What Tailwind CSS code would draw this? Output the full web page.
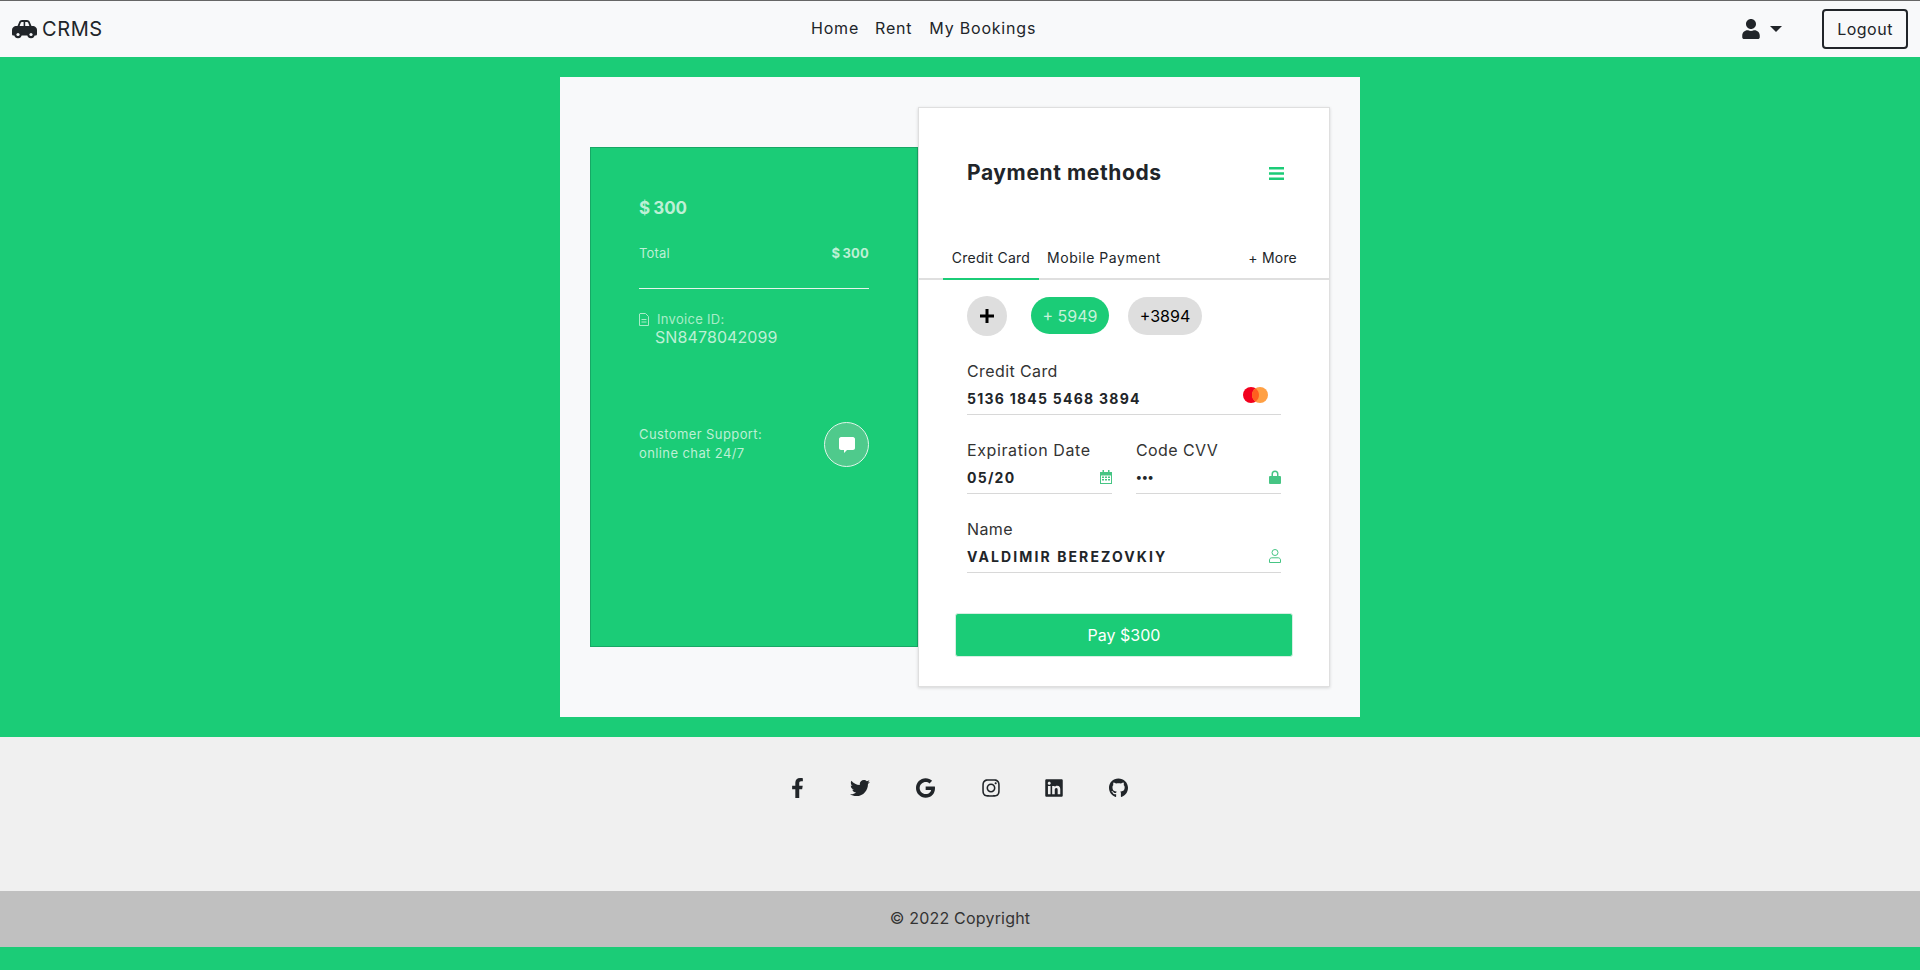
<!DOCTYPE html>
<html><head><meta charset="utf-8"><script src="https://cdn.jsdelivr.net/npm/@tailwindcss/browser@4"></script></head>
<body class="bg-[#1bcc77] font-['Inter','Liberation_Sans',sans-serif] text-[#212529]">
<div class="flex h-[970px] w-[1920px] flex-col overflow-hidden">
<nav class="relative flex h-[57px] shrink-0 items-center justify-between border-t border-[#666] bg-[#f8f9fa] pl-[12px] pr-[12px]">
  <div class="flex items-center gap-[5px]">
    <svg class="h-[20px] w-[25px]" viewBox="0 0 25 20" fill="#212529"><path d="M5.500 7 7.300 2.800C7.800 1.700 8.700 1 10 1h5c1.300 0 2.200.7 2.700 1.800L19.500 7H21.500C23.500 7.500 25 9 25 11v4c0 1-.7 1.500-1.500 1.500H1.500C.7 16.500 0 16 0 15v-4c0-2 1.500-3.500 3.500-4z"/><path fill="#f8f9fa" d="M7.600 7 8.900 3.600C9.100 3.200 9.400 3 9.900 3h1.700v4zM13.200 3h1.900c.5 0 .8.200 1 .6L17.400 7h-4.200z"/><circle cx="6" cy="15.500" r="3.700"/><circle cx="19" cy="15.500" r="3.700"/><circle cx="6" cy="15.500" r="1.600" fill="#f8f9fa"/><circle cx="19" cy="15.500" r="1.600" fill="#f8f9fa"/></svg>
    <span class="text-[20px] tracking-[.6px]">CRMS</span>
  </div>
  <div class="absolute left-[811px] top-[15px] flex gap-[16px] text-[16px] tracking-[.8px]"><span>Home</span><span>Rent</span><span class="ml-[1px]">My Bookings</span></div>
  <div class="flex items-center">
    <svg class="mr-[10px] h-[20px] w-[18px]" viewBox="0 0 448 512" fill="#212529"><path d="M224 256c70.700 0 128-57.300 128-128S294.700 0 224 0 96 57.300 96 128s57.300 128 128 128zm89.600 32h-16.700c-22.200 10.200-46.900 16-72.900 16s-50.600-5.800-72.900-16h-16.700C60.200 288 0 348.200 0 422.400V464c0 26.500 21.500 48 48 48h352c26.500 0 48-21.500 48-48v-41.600c0-74.200-60.200-134.400-134.400-134.400z"/></svg>
    <span class="mr-[40px] h-0 w-0 border-x-[6px] border-t-[6px] border-x-transparent border-t-[#212529]"></span>
    <span class="flex h-[40px] w-[86px] items-center justify-center rounded-[4px] border-2 border-[#212529] text-[16px] tracking-[.5px]">Logout</span>
  </div>
</nav>
<main class="flex h-[680px] shrink-0 justify-center pt-[20px]">
  <div class="flex h-[640px] w-[800px] items-center bg-[#f8f9fa] pl-[30px]">
    <section class="h-[500px] w-[328px] border border-[#17a865] bg-[#1bcc77] px-[48px] pt-[48px] text-[#bdf0d5]">
      <div class="text-[17px] font-bold leading-[24px] [word-spacing:-1px]">$ 300</div>
      <div class="mt-[22px] flex items-center justify-between border-b border-[#e8f3ec] pb-[24px] text-[13px] leading-[22px] tracking-[.2px]"><span>Total</span><span class="font-bold [word-spacing:-1px]">$ 300</span></div>
      <div class="mt-[21px] flex items-center gap-[8px] text-[13px] leading-[18px] tracking-[.3px] text-[#a9ecc8]"><svg class="h-[13px] w-[10px]" viewBox="0 0 10 13" fill="none" stroke="currentColor"><path d="M1 .5h5.500L9.500 3.500V12.500H.5V1ZM2.500 6.500h5M2.500 9h5"/></svg><span>Invoice ID:</span></div>
      <div class="-mt-[1px] ml-[16px] text-[16px] leading-[20px] tracking-[.1px]">SN8478042099</div>
      <div class="mt-[75px] flex items-center justify-between text-[13px] leading-[19px] tracking-[.4px]"><div class="-mt-[2px]"><div>Customer Support:</div><div>online chat 24/7</div></div>
        <div class="flex h-[45px] w-[45px] items-center justify-center rounded-full border border-[#e1f5ea] bg-[#4fca8c]"><svg class="h-[16px] w-[16px]" viewBox="0 0 16 16" fill="#fff"><path d="M2 0h12c1 0 2 1 2 2v9c0 1-1 2-2 2H8L5 16v-3H2c-1 0-2-1-2-2V2C0 1 1 0 2 0z"/></svg></div>
      </div>
    </section>
    <section class="flex h-[580px] w-[412px] flex-col border border-[#dfdfdf] bg-white shadow-[0_1px_3px_rgba(0,0,0,.15)]">
      <div class="flex h-[130px] shrink-0 items-end justify-between pb-[50px] pl-[48px] pr-[45px]"><h2 class="text-[21px] font-bold leading-[30px] tracking-[.6px]">Payment methods</h2><svg class="mb-[8px] h-[13px] w-[15px]" viewBox="0 0 15 13" fill="#1bcc77"><path d="M0 0h15v2.500H0zM0 5.200h15v2.500H0zM0 10.500h15V13H0z"/></svg></div>
      <div class="relative flex h-[42px] shrink-0 border-b-2 border-[#dfdfdf] text-[14px] leading-[20px]"><span class="mb-[-2px] ml-[24px] flex h-[42px] w-[96px] justify-center border-b-2 border-[#1bcc77] pt-[10px] tracking-[.25px]">Credit Card</span><span class="ml-[8px] pt-[10px] tracking-[.55px]">Mobile Payment</span><span class="ml-auto mr-[32px] pt-[10px] tracking-[.2px]">+ More</span></div>
      <div class="flex h-[57px] shrink-0 items-center pl-[48px] pt-[14px] text-[16px]"><span class="flex h-[40px] w-[40px] items-center justify-center rounded-full bg-[#dedede]"><svg class="h-[14px] w-[14px]" viewBox="0 0 14 14" fill="#000"><path d="M5.500 0h3v5.500H14v3H8.500V14h-3V8.500H0v-3h5.500z"/></svg></span><span class="ml-[24px] flex h-[37px] w-[78px] items-center justify-center rounded-full bg-[#1bcc77] text-[#c5f2da]">+ 5949</span><span class="ml-[19px] flex h-[38px] w-[74px] items-center justify-center rounded-full bg-[#dedede] text-black">+3894</span></div>
      <div class="mx-[48px] mt-[23px] flex flex-col">
        <label class="block text-[16px] leading-[22px] tracking-[.4px] text-[#333]">Credit Card</label>
        <div class="flex h-[33px] items-center justify-between border-b border-[#d8d8d8] text-[14px] font-bold tracking-[1.25px]"><span>5136 1845 5468 3894</span><svg class="mb-[6px] mr-[12px] h-[18px] w-[27px]" viewBox="0 0 27 18"><circle cx="9" cy="9" r="8" fill="#f2001d"/><circle cx="18" cy="9" r="8" fill="#ffa044"/><path d="M13.500 2.400a8 8 0 0 1 0 13.200 8 8 0 0 1 0-13.200z" fill="#ff5f1f"/></svg></div>
        <div class="mt-[24px] grid grid-cols-[145px_145px] gap-x-[24px]">
          <div><label class="block text-[16px] leading-[22px] tracking-[.6px] text-[#333]">Expiration Date</label><div class="flex h-[33px] items-center justify-between border-b border-[#d8d8d8] text-[14px] font-bold tracking-[1.25px]"><span>05/20</span><svg class="h-[14px] w-[12px]" viewBox="0 0 12 14" fill="#46c584"><path d="M0 2h2.500V0H4v2h4V0h1.500v2H12v12H0zM1 5.500v7.500h10V5.500zM2 6.500h2v1.500H2zM5 6.500h2v1.500H5zM8 6.500h2v1.500H8zM2 9h2v1.500H2zM5 9h2v1.500H5zM8 9h2v1.500H8z" fill-rule="evenodd"/></svg></div></div>
          <div><label class="block text-[16px] leading-[22px] tracking-[.4px] text-[#333]">Code CVV</label><div class="flex h-[33px] items-center justify-between border-b border-[#d8d8d8] text-[14px] font-bold"><span class="text-[12px] tracking-[.2px]">•••</span><svg class="h-[14px] w-[12px]" viewBox="0 0 12 14" fill="#46c584"><path d="M2.500 6V4a3.500 3.500 0 0 1 7 0v2H11a1 1 0 0 1 1 1v6a1 1 0 0 1-1 1H1a1 1 0 0 1-1-1V7a1 1 0 0 1 1-1zM4 6h4V4a2 2 0 0 0-4 0z"/></svg></div></div>
        </div>
        <div class="mt-[24px]"><label class="block text-[16px] leading-[22px] tracking-[.4px] text-[#333]">Name</label><div class="flex h-[33px] items-center justify-between border-b border-[#d8d8d8] text-[14px] font-bold tracking-[2.1px]"><span>VALDIMIR BEREZOVKIY</span><svg class="h-[14px] w-[12px]" viewBox="0 0 12 14" fill="none" stroke="#46c584"><circle cx="6" cy="3.500" r="3"/><path d="M.5 13.500v-2.500c0-1.200 1-2.200 2.200-2.200h6.600c1.200 0 2.200 1 2.200 2.200v2.500z"/></svg></div></div>
      </div>
      <div class="mx-[36px] mt-[40px] flex h-[44px] items-center justify-center rounded-[3px] border border-[#d5efe2] bg-[#1bcc77] text-[16px] text-white">Pay $300</div>
    </section>
  </div>
</main>
<footer class="flex h-[154px] shrink-0 justify-center bg-[#f0f0f0] text-[#212529]">
  <div class="relative h-[20px] w-[1920px]">
    <div class="absolute left-[791px] top-[41px] flex items-center">
      <svg class="h-[20px] w-[13px]" viewBox="0 0 320 512" fill="currentColor"><path d="M279.140 288l14.220-92.660h-88.910v-60.130c0-25.350 12.420-50.060 52.240-50.060h40.420V6.260S260.430 0 225.360 0c-73.220 0-121.080 44.380-121.080 124.720v70.620H22.890V288h81.390v224h100.170V288z"/></svg>
      <svg class="ml-[46px] h-[20px] w-[20px]" viewBox="0 0 512 512" fill="currentColor"><path d="M459.370 151.716c.325 4.548.325 9.097.325 13.645 0 138.720-105.583 298.558-298.558 298.558-59.452 0-114.680-17.219-161.137-47.106 8.447.974 16.568 1.299 25.340 1.299 49.055 0 94.213-16.568 130.274-44.832-46.132-.975-84.792-31.188-98.112-72.772 6.498.974 12.995 1.624 19.818 1.624 9.421 0 18.843-1.300 27.614-3.573-48.081-9.747-84.143-51.980-84.143-102.985v-1.299c13.969 7.797 30.214 12.670 47.431 13.319-28.264-18.843-46.781-51.005-46.781-87.391 0-19.492 5.197-37.360 14.294-52.954 51.655 63.675 129.300 105.258 216.365 109.807-1.624-7.797-2.599-15.918-2.599-24.040 0-57.828 46.782-104.934 104.934-104.934 30.213 0 57.502 12.670 76.670 33.137 23.715-4.548 46.456-13.320 66.599-25.340-7.798 24.366-24.366 44.833-46.132 57.827 21.117-2.273 41.584-8.122 60.426-16.243-14.292 20.791-32.161 39.308-52.628 54.253z"/></svg>
      <svg class="ml-[46px] h-[20px] w-[19px]" viewBox="0 0 488 512" fill="currentColor"><path d="M488 261.800C488 403.300 391.100 504 248 504 110.800 504 0 393.200 0 256S110.800 8 248 8c66.800 0 123 24.500 166.300 64.900l-67.500 64.900C258.500 52.600 94.300 116.600 94.300 256c0 86.500 69.100 156.600 153.700 156.600 98.200 0 135-70.400 140.800-106.900H248v-85.300h236.100c2.300 12.700 3.900 24.900 3.900 41.400z"/></svg>
      <svg class="ml-[47px] h-[20px] w-[18px]" viewBox="0 0 448 512" fill="currentColor"><path d="M224.100 141c-63.600 0-114.900 51.300-114.900 114.900s51.300 114.900 114.900 114.900S339 319.500 339 255.900 287.700 141 224.100 141zm0 189.600c-41.100 0-74.700-33.500-74.700-74.700s33.500-74.700 74.700-74.700 74.700 33.500 74.700 74.700-33.600 74.700-74.700 74.700zm146.400-194.300c0 14.900-12 26.800-26.800 26.800-14.900 0-26.800-12-26.800-26.800s12-26.800 26.800-26.800 26.800 12 26.800 26.800zm76.100 27.200c-1.700-35.900-9.900-67.700-36.200-93.900-26.200-26.200-58-34.400-93.900-36.200-37-2.100-147.900-2.100-184.900 0-35.800 1.700-67.600 9.900-93.900 36.100s-34.400 58-36.200 93.900c-2.100 37-2.100 147.900 0 184.900 1.700 35.900 9.900 67.700 36.200 93.900s58 34.400 93.900 36.200c37 2.100 147.900 2.100 184.900 0 35.900-1.700 67.700-9.900 93.900-36.200 26.200-26.200 34.400-58 36.200-93.900 2.100-37 2.100-147.800 0-184.800zM398.800 388c-7.800 19.600-22.900 34.700-42.600 42.600-29.500 11.700-99.500 9-132.100 9s-102.700 2.600-132.100-9c-19.600-7.800-34.700-22.900-42.600-42.600-11.700-29.500-9-99.500-9-132.100s-2.600-102.700 9-132.100c7.800-19.600 22.900-34.700 42.600-42.600 29.500-11.700 99.500-9 132.100-9s102.700-2.600 132.100 9c19.600 7.800 34.700 22.900 42.600 42.600 11.700 29.500 9 99.500 9 132.100s2.700 102.700-9 132.100z"/></svg>
      <svg class="ml-[45px] h-[20px] w-[18px]" viewBox="0 0 448 512" fill="currentColor"><path d="M416 32H31.900C14.300 32 0 46.500 0 64.300v383.400C0 465.500 14.300 480 31.900 480H416c17.600 0 32-14.500 32-32.300V64.300c0-17.800-14.400-32.300-32-32.300zM135.400 416H69V202.200h66.500V416zm-33.200-243c-21.300 0-38.500-17.300-38.500-38.500S80.900 96 102.200 96c21.200 0 38.500 17.300 38.500 38.500 0 21.300-17.200 38.500-38.500 38.500zm282.100 243h-66.400V312c0-24.800-.5-56.700-34.500-56.700-34.600 0-39.900 27-39.900 54.900V416h-66.400V202.200h63.700v29.200h.9c8.900-16.800 30.600-34.500 62.900-34.500 67.200 0 79.700 44.300 79.700 101.900V416z"/></svg>
      <svg class="ml-[46px] h-[20px] w-[19px]" viewBox="0 0 496 512" fill="currentColor"><path d="M244.800 8C106.100 8 0 113.300 0 252c0 110.900 69.800 205.800 169.500 239.200 12.800 2.300 17.300-5.600 17.300-12.100 0-6.200-.3-40.400-.3-61.400 0 0-70 15-84.700-29.800 0 0-11.400-29.100-27.800-36.600 0 0-22.900-15.700 1.600-16 0 0 24.900 2 38.600 25.800 21.900 38.600 58.600 27.500 72.900 20.900 2.300-16 8.800-27.100 16-33.700-55.900-6.200-112.300-14.300-112.300-110.500 0-27.500 7.600-41.300 23.600-58.900-2.600-6.500-11.100-33.300 2.600-67.900 20.900-6.500 69 27 69 27 20-5.600 41.500-8.500 62.800-8.500s42.800 2.900 62.800 8.500c0 0 48.100-33.600 69-27 13.700 34.700 5.200 61.400 2.600 67.900 16 17.700 25.800 31.500 25.800 58.900 0 96.500-58.900 104.200-114.800 110.500 9.200 7.900 17 22.900 17 46.400 0 33.700-.3 75.400-.3 83.600 0 6.500 4.600 14.400 17.300 12.100C428.200 457.800 496 362.900 496 252 496 113.300 383.500 8 244.800 8z"/></svg>
    </div>
  </div>
</footer>
<div class="flex h-[56px] shrink-0 items-center justify-center bg-[#c0c0c0] pb-[2px] text-[16px] tracking-[.2px] text-[#333]">© 2022 Copyright</div>
</div>
</body></html>
